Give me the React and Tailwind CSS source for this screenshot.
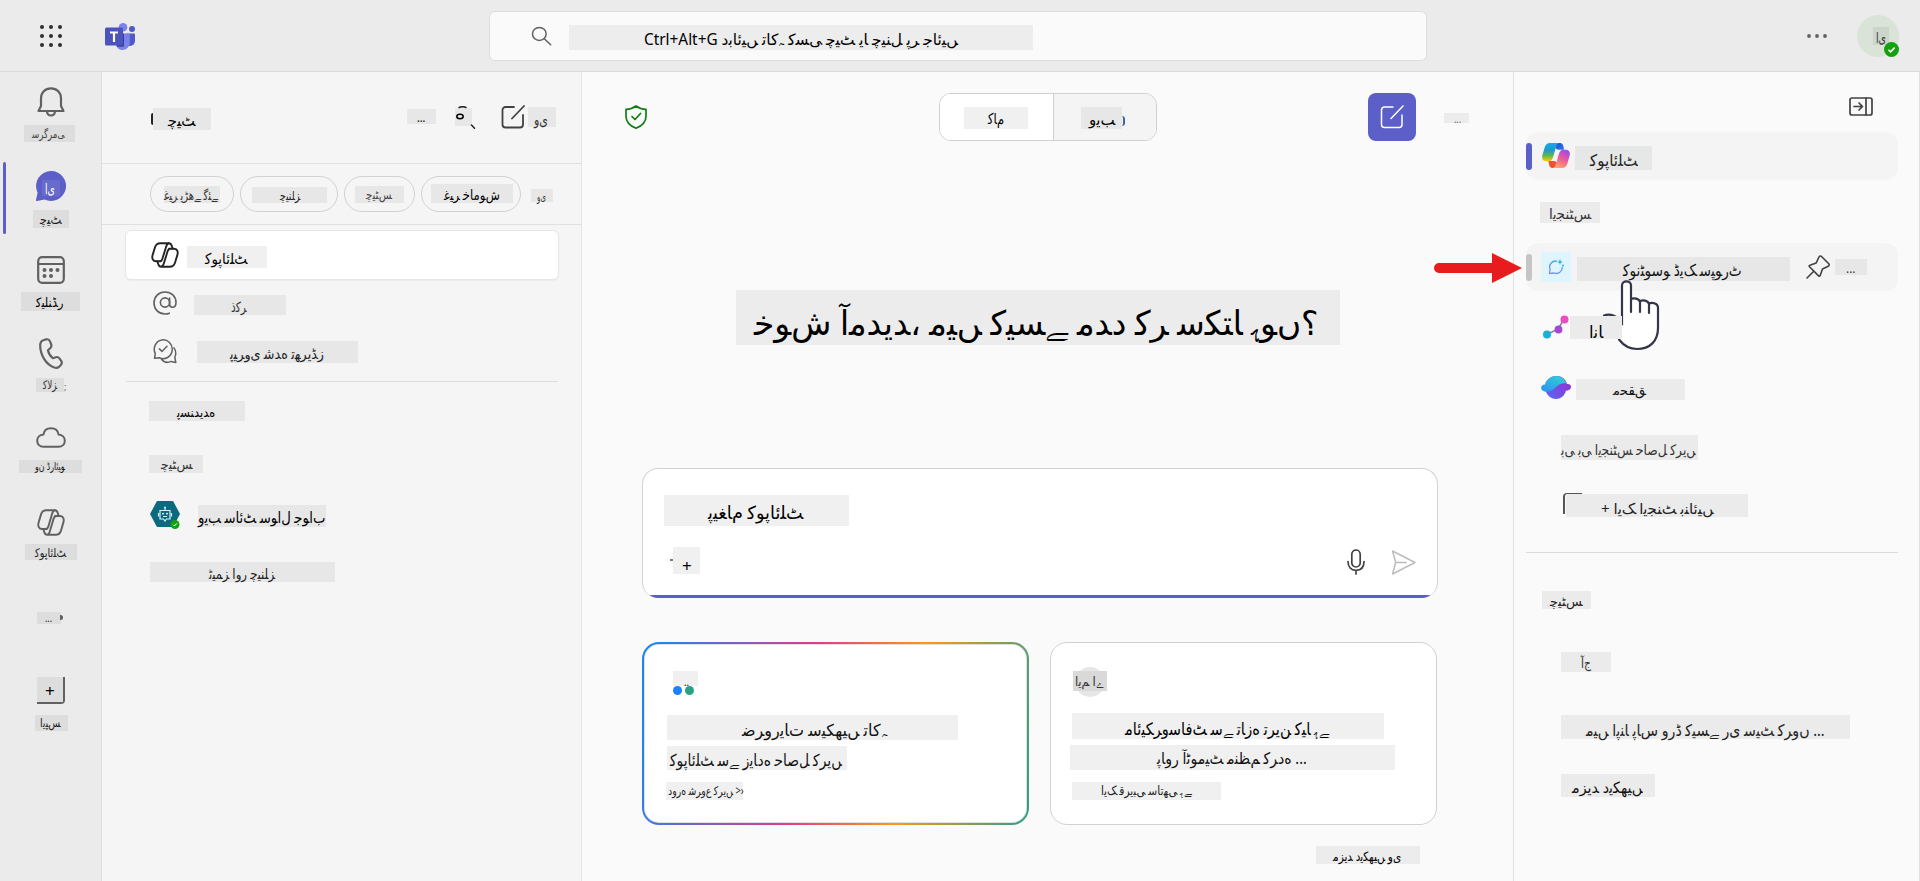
import React, { useLayoutEffect, useRef, useState } from "react";

/* ---------- Urdu shaping ---------- */

// letter -> first code point of its presentation forms, and whether it joins onwards
const FORMS = {
  "آ": [0xfe81, 0], "ئ": [0xfe89, 1], "ا": [0xfe8d, 0], "ب": [0xfe8f, 1], "ت": [0xfe95, 1],
  "ج": [0xfe9d, 1], "ح": [0xfea1, 1], "خ": [0xfea5, 1], "د": [0xfea9, 0], "ذ": [0xfeab, 0],
  "ر": [0xfead, 0], "ز": [0xfeaf, 0], "س": [0xfeb1, 1], "ش": [0xfeb5, 1], "ص": [0xfeb9, 1],
  "ض": [0xfebd, 1], "ظ": [0xfec5, 1], "ع": [0xfec9, 1], "غ": [0xfecd, 1], "ف": [0xfed1, 1],
  "ق": [0xfed5, 1], "ل": [0xfedd, 1], "م": [0xfee1, 1], "ن": [0xfee5, 1], "و": [0xfeed, 0],
  "پ": [0xfb56, 1], "ٹ": [0xfb66, 1], "چ": [0xfb7a, 1], "ڈ": [0xfb88, 0], "ڑ": [0xfb8c, 0],
  "ک": [0xfb8e, 1], "گ": [0xfb92, 1], "ں": [0xfb9e, 0], "ہ": [0xfba6, 1], "ھ": [0xfbaa, 1],
  "ے": [0xfbae, 0], "ی": [0xfbfc, 1],
};

function shape(text) {
  const chars = [...text];
  return chars
    .map((c, i) => {
      const form = FORMS[c];
      if (!form) return c;
      const before = FORMS[chars[i - 1]];
      const joinsBefore = Boolean(before && before[1]);
      const joinsAfter = Boolean(form[1] && FORMS[chars[i + 1]]);
      const offset = joinsBefore ? (joinsAfter ? 3 : 1) : joinsAfter ? 2 : 0;
      // the free-standing heh uses the rounder Arabic glyph
      if (c === "ہ" && offset === 0) return "\ufee9";
      return String.fromCharCode(form[0] + offset);
    })
    .join("");
}

// Text squeezed or stretched to a given width
function Fit({ children, width, className = "" }) {
  const ref = useRef(null);
  const [scale, setScale] = useState(1);
  useLayoutEffect(() => {
    if (width && ref.current) setScale(width / ref.current.offsetWidth);
  }, [width]);
  return (
    <span
      ref={ref}
      className={`mt-px block w-max shrink-0 origin-left whitespace-pre leading-none [direction:ltr] [unicode-bidi:bidi-override] ${className}`}
      style={{ transform: `scaleX(${scale})` }}
    >
      {shape(children)}
    </span>
  );
}

function Chip({ children, width, className, bg = "bg-[#e7e7e7]", text = "" }) {
  return (
    <div className={`flex shrink-0 items-start ${bg} ${className}`}>
      <Fit width={width} className={text}>{children}</Fit>
    </div>
  );
}

/* ---------- Icons ---------- */

function Svg({ children, className, box = "0 0 24 24", sw = 1.5 }) {
  return (
    <svg viewBox={box} preserveAspectRatio="none" className={`block shrink-0 ${className}`} fill="none" stroke="currentColor" strokeWidth={sw} strokeLinecap="round" strokeLinejoin="round">
      {children}
    </svg>
  );
}

const Compose = ({ className, sw = 1.7 }) => (
  <Svg className={className} sw={sw}>
    <path d="M13 2H4.500A3 3 0 0 0 1.500 5v14.500a3 3 0 0 0 3 3h14.500a3 3 0 0 0 3-3V10M11 13.500 23 1" />
  </Svg>
);

const HALF = "M10 19.300H5.200c-3.200 0-4.600-2.600-3.600-6.200L4 5.200C4.900 2.400 6.400 1.200 9.200 1.200h8.600c1.700 0 2.400.9 2.900 2.500l1 3M18 1.200c-1.700.2-2.300 1.500-2.800 3.200l-3.800 12.300c-.6 1.800-1.300 2.600-3 2.600";

const CopilotLine = ({ className, sw = 1.9 }) => (
  <Svg className={className} box="0 0 28 26" sw={sw}>
    <path d={HALF} />
    <path d={HALF} transform="rotate(180 14 13)" />
  </Svg>
);

const Teams = () => (
  <svg viewBox="0 0 30 27" className="block h-[27px] w-[30px] shrink-0">
    <circle cx="27" cy="6" r="3" fill="#5059c9" />
    <circle cx="18" cy="4.300" r="4.300" fill="#7b83eb" />
    <path d="M21 10.500h8c.6 0 1 .4 1 1V18a5 5 0 0 1-5 5h-4z" fill="#5059c9" />
    <path d="M11 10.500h13c.5 0 .8.4.8.9V19c0 4.500-3.300 8-7.400 8-3.600 0-6.400-2.600-6.400-7z" fill="#7b83eb" />
    <path d="M11 10.500h8v12c0 .8-.6 1.300-1.300 1.300h-5.500A8 8 0 0 1 11 20z" fill="#3b4192" />
    <rect y="4.500" width="18" height="18" rx="1.500" fill="#4b53bc" />
    <path d="M5 9.500h8M9 9.500V19" stroke="#fff" strokeWidth="2.200" fill="none" />
  </svg>
);

const Check = ({ className }) => (
  <svg viewBox="0 0 12 12" className={`absolute block ${className}`}>
    <circle cx="6" cy="6" r="6" fill="#13a10e" />
    <path d="M3.600 6.200 5.300 7.900 8.500 4.500" fill="none" stroke="#fff" strokeWidth="1.300" />
  </svg>
);

const CopilotColor = () => (
  <svg viewBox="0 0 28 25" className="ml-[9px] mt-[11px] block h-[25px] w-[28px] shrink-0">
    <defs>
      <linearGradient id="ca" x1="0" y1="0" x2="0" y2="1">
        <stop offset="0" stopColor="#18a8ee" /><stop offset=".4" stopColor="#2298c8" /><stop offset=".7" stopColor="#62b84c" /><stop offset="1" stopColor="#fcd000" />
      </linearGradient>
      <linearGradient id="cb" x1=".8" y1="0" x2=".3" y2="1">
        <stop offset="0" stopColor="#9a48ee" /><stop offset=".5" stopColor="#ee5a9a" /><stop offset="1" stopColor="#ffa765" />
      </linearGradient>
      <linearGradient id="cc" x1="0" y1="0" x2="1" y2="1">
        <stop offset="0" stopColor="#1b4ad6" /><stop offset="1" stopColor="#2a7ce8" />
      </linearGradient>
    </defs>
    <path d="M12 0h6c2 0 3 1.500 3.400 3.500l.8 3.300h-5.500c-2 0-3.200-1.500-3.600-3z" fill="url(#cc)" />
    <path d="M16 25h-5.500c-2 0-3-1.500-3.400-3.500l-.8-3.500h5.500c2 0 3.200 1.500 3.600 3z" fill="#ee5132" />
    <path d="M8 0h9.500c-2 .3-2.800 2-3.400 4l-3 10c-.7 2.500-2 4.300-4.500 4.300H4.500C1 18.300-.5 16 .3 12.500L2.500 5C3.500 1.800 5 0 8 0z" fill="url(#ca)" />
    <path d="M20 25h-9.500c2-.3 2.800-2 3.400-4l3-10c.7-2.500 2-4.300 4.500-4.300h2.100c3.500 0 5 2.300 4.200 5.800L25.500 20c-1 3.200-2.500 5-5.500 5z" fill="url(#cb)" />
  </svg>
);

/* ---------- Top bar ---------- */

function TopBar() {
  return (
    <header className="flex h-[72px] shrink-0 border-b border-[#dadada] bg-[#ebebeb]">
      <svg viewBox="0 0 23 23" className="ml-[40px] mt-[25px] block h-[23px] w-[23px] shrink-0" fill="#2f2f2f">
        {[2, 11, 20].map((y) => [2, 11, 20].map((x) => <circle key={`${x}-${y}`} cx={x} cy={y} r="2" />))}
      </svg>
      <div className="ml-[42px] mt-[23px]"><Teams /></div>
      <div className="ml-[354px] mt-[11px] flex h-[50px] w-[938px] shrink-0 rounded-[6px] border border-[#dedede] bg-[#fafafa]">
        <Svg className="ml-[41px] mt-[14px] h-[20px] w-[21px] text-[#616161]" sw={1.7}>
          <circle cx="9.500" cy="9.500" r="7.800" /><path d="m15.500 15.500 7 7" />
        </Svg>
        <Chip width={314} bg="bg-[#ededed]" className="ml-[17px] mt-[13px] h-[25px] w-[464px] pl-[75px] pt-[6px]" text="text-[15.500px]">
          Ctrl+Alt+G دبائیں تاکہ کسی چیٹ یا چینل پر جائیں
        </Chip>
      </div>
      <svg viewBox="0 0 20 4" className="ml-[380px] mt-[34px] block h-[4px] w-[20px] shrink-0" fill="#616161">
        <circle cx="2" cy="2" r="1.900" /><circle cx="10" cy="2" r="1.900" /><circle cx="18" cy="2" r="1.900" />
      </svg>
      <div className="relative ml-[30px] mt-[15px] h-[42px] w-[42px] shrink-0 rounded-full bg-[#dae3d7]">
        <Chip width={10} bg="bg-[#ccd5c9]" className="ml-[16px] mt-[12px] h-[18px] w-[16px] pl-[3px] pt-[3px]" text="text-[14px] text-[#333]">ای</Chip>
        <Check className="right-0 bottom-0 h-[15px] w-[15px]" />
      </div>
    </header>
  );
}

/* ---------- App rail ---------- */

const railChip = "bg-[#dddddd]";

function Rail() {
  return (
    <nav className="flex w-[102px] shrink-0 flex-col border-r border-[#dedede] bg-[#ebebeb] text-[#616161]">
      <Svg className="ml-[37px] mt-[15px] h-[30px] w-[28px]" box="0 0 28 30" sw={2.200}>
        <path d="M14 1.300c6 0 10 4.300 10 10V19l2.500 5H1.500L4 19v-7.700c0-5.700 4-10 10-10zM10 24.500c.3 2.800 1.800 4 4 4s3.700-1.200 4-4" />
      </Svg>
      <Chip width={33} bg={railChip} className="ml-[24px] mt-[8px] h-[17px] w-[51px] pl-[8px] pt-[2px]" text="text-[11.500px] text-[#444]">سرگرمی</Chip>

      <div className="mt-[20px] flex h-[72px] shrink-0">
        <div className="ml-[3px] h-[72px] w-[3px] rounded-full bg-[#5b5fc7]" />
        <div className="ml-[27px] pt-[9px]">
          <div className="relative ml-[3px] h-[30px] w-[30px]">
            <svg viewBox="0 0 30 30" className="absolute inset-0 block h-[30px] w-[30px]" fill="#5b5fc7">
              <path d="M15 0a15 15 0 1 1-6.500 28.500L1 30c-.7.100-1.200-.4-1-1l1.600-7.300A15 15 0 0 1 15 0z" />
            </svg>
            <div className="relative flex pl-[6px] pt-[9px]">
              <Chip width={10} bg="bg-[#676bcb]" className="h-[16px] w-[18px] pl-[3px] pt-px" text="text-[14px] text-white">ای</Chip>
            </div>
          </div>
          <Chip width={22} bg={railChip} className="mt-[9px] h-[18px] w-[36px] pl-[7px] pt-[2px]" text="text-[13px] text-[#222]">چیٹ</Chip>
        </div>
      </div>

      <Svg className="ml-[37px] mt-[22px] h-[28px] w-[28px]" box="0 0 28 28" sw={2.200}>
        <rect x="1.200" y="1.200" width="25.600" height="25.600" rx="4" /><path d="M1.500 8h25" />
        <g fill="currentColor" stroke="none"><circle cx="7.500" cy="14" r="2" /><circle cx="14" cy="14" r="2" /><circle cx="20.500" cy="14" r="2" /><circle cx="7.500" cy="20" r="2" /><circle cx="14" cy="20" r="2" /></g>
      </Svg>
      <Chip width={27} bg={railChip} className="ml-[21px] mt-[8px] h-[19px] w-[59px] pl-[15px] pt-[3px]" text="text-[13px] text-black">کیلنڈر</Chip>

      <Svg className="ml-[39px] mt-[27px] h-[31px] w-[24px]" box="0 0 24 31" sw={2.200}>
        <path d="m5 2 2-.6c2-.5 3.300.3 4 2l1.200 3c.5 1.500.2 2.700-1 3.800L9 12.200c.5 3 2.500 6 4.800 8l3-1c1.500-.5 2.700 0 3.600 1.200l1.800 2.500c1 1.500.8 3-.5 4.300L20 28.800c-1.200 1-3 1.200-4.700.7C7 26.500 1 17 1.200 6.800 1.300 4.300 2.600 2.600 5 2z" />
      </Svg>
      <div className="ml-[36px] mt-[9px] flex">
        <Chip width={14} bg={railChip} className="h-[14px] w-[28px] pl-[7px] pt-0" text="text-[12px] text-[#333]">کالز</Chip>
        <span className="text-[9px] leading-[18px]">;</span>
      </div>

      <Svg className="ml-[36px] mt-[31px] h-[21px] w-[30px]" box="0 0 30 21" sw={2}>
        <path d="M7.500 7.500C8 3.500 11 1.200 15 1.200s7 2.300 7.500 6.300c3.800.2 6.300 2.800 6.300 6.300s-2.600 6-6.300 6h-15c-3.800 0-6.300-2.500-6.300-6s2.500-6.100 6.300-6.300z" />
      </Svg>
      <Chip width={30} bg={railChip} className="ml-[19px] mt-[12px] h-[13px] w-[63px] pl-[16px] pt-0" text="text-[10.500px] text-[#111]">ون ڈرائیو</Chip>

      <CopilotLine className="ml-[37px] mt-[36px] h-[27px] w-[28px]" />
      <Chip width={31} bg={railChip} className="ml-[25px] mt-[8px] h-[16px] w-[52px] pl-[10px] pt-[2px]" text="text-[12px] text-[#222]">کوپائلٹ</Chip>

      <div className="ml-[37px] mt-[52px] flex">
        <Chip width={7} bg={railChip} className="h-[12px] w-[24px] pl-[8px]" text="text-[10px] text-[#111]">...</Chip>
        <div className="-ml-px mt-[3px] h-[5px] w-[3px] rounded-r-full bg-[#616161]" />
      </div>

      <div className="ml-[37px] mt-[53px] h-[27px] w-[28px] rounded-br-[4px] border-b-2 border-r-2 border-[#616161]">
        <Chip width={10} bg={railChip} className="h-[25px] w-[26px] pl-[8px] pt-[4px]" text="text-[17px] text-black">+</Chip>
      </div>
      <Chip width={21} bg={railChip} className="ml-[35px] mt-[11px] h-[16px] w-[33px] pl-[5px] pt-px" text="text-[12px] text-[#222]">ایپس</Chip>
    </nav>
  );
}

/* ---------- Chat list ---------- */

function ChatList() {
  const pill = "flex h-[36px] shrink-0 rounded-full border border-[#d1d1d1]";
  return (
    <aside className="flex w-[480px] shrink-0 flex-col border-r border-[#e4e4e4] bg-[#f5f5f5]">
      <div className="flex h-[92px] shrink-0 border-b border-[#e0e0e0]">
        <div className="ml-[49px] mt-[41px] h-[12px] w-[2px] rounded-l-full bg-[#242424]" />
        <Chip width={28} className="mt-[36px] h-[22px] w-[58px] pl-[15px] pt-[4px]" text="text-[14.500px]">چیٹ</Chip>
        <Chip width={8} className="ml-[196px] mt-[37px] h-[15px] w-[29px] pl-[10px] pt-px" text="text-[13px]">...</Chip>
        <div className="relative ml-[19px] mt-[36px] h-[18px] w-[17px] bg-[#e7e7e7]">
          <Svg className="absolute -left-px -top-[2px] h-[23px] w-[22px] text-[#222]" box="0 0 22 23" sw={1.500}>
            <path d="M5 1.500c2.500-1 5-1 7 0M17.500 19l3 3.200" /><ellipse cx="6" cy="10.500" rx="3.200" ry="2.200" stroke="#000" />
          </Svg>
        </div>
        <Compose className="ml-[29px] mt-[33px] h-[24px] w-[24px] text-[#424242]" sw={1.800} />
        <Chip width={14} className="ml-[3px] mt-[35px] h-[20px] w-[28px] pl-[6px] pt-[4px]" text="text-[15px] text-[#333]">وی</Chip>
      </div>
      <div className="flex h-[61px] shrink-0 gap-[6px] border-b border-[#e0e0e0] pl-[48px] pt-[12px]">
        <div className={`${pill} w-[84px]`}><Chip width={54} className="ml-[13px] mt-[9px] h-[17px] w-[56px] pt-[2px]" text="text-[13px] text-[#333]">غیر پڑھے گئے</Chip></div>
        <div className={`${pill} w-[98px]`}><Chip width={20} className="ml-[11px] mt-[10px] h-[16px] w-[75px] pl-[28px] pt-[2px]" text="text-[12px] text-[#222]">چینلز</Chip></div>
        <div className={`${pill} w-[71px]`}><Chip width={26} className="ml-[10px] mt-[9px] h-[17px] w-[49px] pl-[11px] pt-[2px]" text="text-[12px] text-[#444]">چیٹس</Chip></div>
        <div className={`${pill} w-[100px]`}><Chip width={56} className="ml-[9px] mt-[7px] h-[19px] w-[82px] pl-[13px] pt-[3px]" text="text-[14px]">غیر خاموش</Chip></div>
        <Chip width={9} className="ml-[4px] mt-[13px] h-[13px] w-[22px] pl-[6px] pt-px" text="text-[11px] text-[#333]">وی</Chip>
      </div>

      <div className="ml-[23px] mt-[5px] flex h-[50px] w-[434px] shrink-0 rounded-[6px] border border-[#e6e6e6] bg-white shadow-[0_1px_1px_rgba(0,0,0,0.04)]">
        <CopilotLine className="ml-[25px] mt-[11px] h-[26px] w-[28px] text-[#242424]" />
        <Chip width={43} bg="bg-[#f0f0f0]" className="ml-[8px] mt-[15px] h-[22px] w-[80px] pl-[18px] pt-[4px]" text="text-[15px]">کوپائلٹ</Chip>
      </div>
      <div className="mt-[11px] flex h-[24px] shrink-0 text-[#616161]">
        <Svg className="ml-[51px] h-[24px] w-[24px]" sw={1.600}>
          <circle cx="12" cy="11.500" r="4.600" /><path d="M16.600 7v6c0 2 1 3.200 2.800 3.200 2 0 3.600-1.700 3.600-4.700C23 5.300 18.300 1 12 1S1 5.500 1 12s4.700 11 11 11c1.700 0 3-.2 4.300-.8" />
        </Svg>
        <Chip width={16} className="ml-[17px] mt-[4px] h-[20px] w-[92px] pl-[37px] pt-[4px]" text="text-[14px] text-[#333]">ذکر</Chip>
      </div>
      <div className="mt-[23px] flex h-[25px] shrink-0 text-[#616161]">
        <Svg className="ml-[51px] mt-px h-[25px] w-[24px]" sw={1.500}>
          <path d="M1.500 18.500 2.300 14A9 9 0 1 1 6.500 18zM6.500 9.500 9 12l5-5M21 8.500c2 2.800 2.200 6.200.8 9l1 5-4.800-1c-3.500 1.600-7.200.8-9.500-2" />
        </Svg>
        <Chip width={94} className="ml-[20px] mt-[3px] h-[22px] w-[161px] pl-[33px] pt-[4px]" text="text-[14.500px] text-[#222]">پیروی شدہ تھریڈز</Chip>
      </div>
      <div className="ml-[24px] mt-[18px] h-px w-[432px] shrink-0 bg-[#dcdcdc]" />
      <Chip width={38} className="ml-[47px] mt-[19px] h-[20px] w-[96px] pl-[28px] pt-[4px]" text="text-[13px]">پسندیدہ</Chip>
      <Chip width={31} className="ml-[47px] mt-[34px] h-[18px] w-[54px] pl-[12px] pt-[2px]" text="text-[13px] text-[#333]">چیٹس</Chip>
      <div className="mt-[28px] flex h-[28px] shrink-0">
        <div className="relative ml-[48px] h-[28px] w-[30px]">
          <svg viewBox="0 0 30 28" className="block h-[28px] w-[30px]">
            <path d="M8 0h14c.8 0 1.200.3 1.600 1L30 13l-6.400 12c-.4.700-.8 1-1.600 1H8c-.8 0-1.200-.3-1.600-1L0 13 6.400 1C6.800.3 7.200 0 8 0z" fill="#0b6a7f" />
            <path d="M10 9.500h10v8.500h-3.500L15 20l-1.500-2H10zM15 9V6.500M8.500 12v3.500M21.500 12v3.500M13 15.500h4" fill="none" stroke="#d5f4f5" strokeWidth="1.200" />
            <circle cx="13" cy="12.700" r=".9" fill="#fff" /><circle cx="17" cy="12.700" r=".9" fill="#fff" /><circle cx="15" cy="6.500" r="1" fill="#d5f4f5" />
          </svg>
          <Check className="bottom-0 right-0 h-[9px] w-[10px]" />
        </div>
        <Chip width={127} className="ml-[18px] mt-[4px] h-[22px] w-[128px] pt-[4px]" text="text-[15.500px]">ویب سائٹ سوال جواب</Chip>
      </div>
      <Chip width={66} className="ml-[48px] mt-[33px] h-[20px] w-[185px] pl-[59px] pt-[4px]" text="text-[14px] text-[#222]">ٹیمز اور چینلز</Chip>
    </aside>
  );
}

/* ---------- Main ---------- */

const cardChip = "bg-[#f0f0f0]";

function Main() {
  return (
    <main className="flex w-[931px] shrink-0 flex-col bg-[#fafafa]">
      <div className="flex h-[69px] shrink-0 items-start">
        <Svg className="ml-[43px] mt-[33px] h-[24px] w-[22px] text-[#107c10]" box="0 0 22 24" sw={1.700}>
          <path d="M11 1c3 2.300 6 3.300 10 3.400V11c0 6-3.600 9.800-10 12.200C4.600 20.800 1 17 1 11V4.400C5 4.300 8 3.300 11 1zM7 11.500l3 3 5.500-6" />
        </Svg>
        <div className="ml-[292px] mt-[21px] flex h-[48px] w-[218px] shrink-0 overflow-hidden rounded-[12px] border border-[#cfcfcf]">
          <div className="w-[114px] border-r border-[#cfcfcf] bg-white">
            <Chip width={16} bg={cardChip} className="ml-[24px] mt-[13px] h-[22px] w-[64px] pl-[24px] pt-[3px]" text="text-[15px]">کام</Chip>
          </div>
          <div className="flex grow bg-[#f4f4f4]">
            <Chip width={26} className="ml-[27px] mt-[13px] h-[22px] w-[41px] pl-[8px] pt-[4px]" text="text-[15px]">ویب</Chip>
            <div className="mt-[22px] h-[10px] w-[3px] rounded-r-full border-r-2 border-[#3a66a8]" />
          </div>
        </div>
        <div className="ml-[211px] mt-[21px] flex h-[48px] w-[48px] shrink-0 items-center justify-center rounded-[8px] bg-[#5b5fc7] text-white">
          <Compose className="h-[24px] w-[24px]" sw={1.500} />
        </div>
        <Chip width={7} bg="bg-[#ececec]" className="ml-[28px] mt-[41px] h-[10px] w-[25px] pl-[10px]" text="text-[10px] text-[#555]">...</Chip>
      </div>

      <Chip width={565} bg="bg-[#ececec]" className="ml-[154px] mt-[149px] h-[55px] w-[604px] pl-[18px] pt-[14px]" text="text-[34px]">
        خوش آمدید، میں کیسے مدد کر سکتا ہوں؟
      </Chip>

      <div className="relative ml-[60px] mt-[123px] flex h-[130px] w-[796px] shrink-0 overflow-hidden rounded-[16px] border border-b-0 border-[#d1d1d1] bg-white">
        <div className="w-[210px]">
          <Chip width={95} bg={cardChip} className="ml-[21px] mt-[26px] h-[31px] w-[185px] pl-[44px] pt-[7px]" text="text-[18px]">پیغام کوپائلٹ</Chip>
          <div className="ml-[27px] mt-[21px] flex">
            <div className="mt-[12px] h-[2px] w-[3px] bg-[#777]" />
            <Chip width={10} bg={cardChip} className="h-[27px] w-[27px] pl-[9px] pt-[9px]" text="text-[17px]">+</Chip>
          </div>
        </div>
        <Svg className="ml-[494px] mt-[80px] h-[26px] w-[18px] text-[#424242]" box="0 0 18 26" sw={1.700}>
          <rect x="4.800" y="1" width="8.400" height="17" rx="4.200" /><path d="M1 12.500c0 5.500 3 8.800 8 8.800s8-3.300 8-8.800M9 21.500V25" />
        </Svg>
        <Svg className="ml-[26px] mt-[81px] h-[25px] w-[25px] text-[#bdbdbd]" sw={1.500}>
          <path d="M1.500 1 23 12 1.500 23 4.500 12zM4.500 12h10" />
        </Svg>
        <div className="absolute bottom-0 left-0 h-[3px] w-full bg-[#5b5fc7]" />
      </div>

      <div className="ml-[60px] mt-[44px] flex shrink-0 gap-[21px]">
        <div className="h-[183px] w-[387px] rounded-[17px] bg-[linear-gradient(100deg,#1c86f0_0%,#1c86f0_3%,#e03c8a_42%,#fa9a14_68%,#2aa08a_100%)] p-[2px]">
          <div className="flex h-[179px] w-[383px] flex-col rounded-[15px] bg-white shadow-[inset_0_0_0_1px_rgba(0,0,0,0.12)]">
            <Chip width={5} bg={cardChip} className="ml-[29px] mt-[27px] h-[15px] w-[25px] pl-[11px] pt-[4px]" text="text-[11px]">..</Chip>
            <div className="ml-[29px] flex h-[9px] gap-[3px]">
              <div className="h-[9px] w-[9px] rounded-full bg-[#1c80f8]" />
              <div className="h-[9px] w-[9px] rounded-full bg-[#2ba085]" />
            </div>
            <Chip width={144} bg={cardChip} className="ml-[23px] mt-[20px] h-[25px] w-[291px] pl-[75px] pt-[6px]" text="text-[16.500px] text-[#111]">ضروریات سیکھیں تاکہ</Chip>
            <Chip width={172} bg={cardChip} className="ml-[23px] mt-[6px] h-[24px] w-[180px] pl-[3px] pt-[5px]" text="text-[16.500px] text-[#111]">کوپائلٹ سے زیادہ حاصل کریں</Chip>
            <Chip width={76} bg={cardChip} className="ml-[22px] mt-[12px] h-[18px] w-[77px] pl-[2px] pt-[2px]" text="text-[12px] text-[#222]">{"دورہ شروع کریں >›"}</Chip>
          </div>
        </div>
        <div className="flex h-[183px] w-[387px] flex-col rounded-[17px] border border-[#d1d1d1] bg-white">
          <div className="ml-[24px] mt-[24px] flex h-[30px] w-[30px] items-center justify-center rounded-full bg-[#e6e6e6]">
            <Chip width={29} bg="bg-[#d9d9d9]" className="-mt-[2px] h-[20px] w-[34px] pl-[2px] pt-[3px]" text="text-[13px] text-[#333]">ایم اے</Chip>
          </div>
          <Chip width={204} bg={cardChip} className="ml-[21px] mt-[16px] h-[26px] w-[312px] pl-[53px] pt-[6px]" text="text-[17px]">مائیکروسافٹ سے تازہ ترین کیا ہے</Chip>
          <Chip width={150} bg={cardChip} className="ml-[19px] mt-[6px] h-[25px] w-[325px] pl-[87px] pt-[4px]" text="text-[16px] text-[#111]">پاور آٹومیٹ منظم کردہ ...</Chip>
          <Chip width={90} bg={cardChip} className="ml-[21px] mt-[12px] h-[18px] w-[149px] pl-[29px] pt-[2px]" text="text-[12.500px] text-[#222]">ایک قریبی ساتھی ہے</Chip>
        </div>
      </div>
      <Chip width={68} bg="bg-[#ececec]" className="ml-[734px] mt-[21px] h-[18px] w-[104px] pl-[17px] pt-[3px]" text="text-[13px]">مزید دیکھیں وی</Chip>
    </main>
  );
}

/* ---------- Agents panel ---------- */

const sideChip = "bg-[#ebebeb]";

function Hand() {
  return (
    <svg viewBox="0 0 62 72" className="absolute left-[88px] top-[208px] block h-[72px] w-[62px]" fill="none">
      <path d="M3 35c5-3 12-1.500 17 5v8L12 56c6 8 11 14 23 14 14 0 22-9 22-22V24.500c0-5-8.500-5-9.500-1-1-6-8.500-6-9.500-1.500-1.500-5-8.500-4.500-9 0V5.500C29 0 20 0 20 5.500V56l-6-2z" fill="#fff" />
      <path d="M2 35.500c6-2.500 13 0 18 7V5.500C20 0 29 0 29 5.500V32M29 19c3-1.500 8-.5 9 3v10M38 21c3-1.500 8-.5 9 3v9M47 23.500c4-1.500 9 0 9 4V48c0 13-8 21-21 21-8 0-13-3-18-9.500" stroke="#33354a" strokeWidth="2.200" strokeLinecap="round" />
    </svg>
  );
}

function Agents() {
  return (
    <aside className="relative flex w-[407px] shrink-0 flex-col border-l border-r border-[#e0e0e0] bg-[#fafafa]">
      <Svg className="ml-[335px] mt-[25px] h-[19px] w-[24px] text-[#424242]" box="0 0 24 19" sw={1.700}>
        <rect x="1" y="1" width="22" height="17" rx="2" /><path d="M17 1v17M5 9.500h8M10 6l3.500 3.500L10 13" />
      </Svg>

      <div className="ml-[12px] mt-[16px] flex h-[48px] w-[372px] shrink-0 rounded-[12px] bg-[#f4f4f4]">
        <div className="mr-px mt-[11px] h-[27px] w-[6px] rounded-full bg-[#5b5fc7]" />
        <CopilotColor />
        <Chip width={48} bg="bg-[#e6e8e7]" className="ml-[5px] mt-[14px] h-[24px] w-[77px] pl-[15px] pt-[5px]" text="text-[16px] text-[#222]">کوپائلٹ</Chip>
      </div>
      <Chip width={42} bg={sideChip} className="ml-[26px] mt-[22px] h-[21px] w-[60px] pl-[9px] pt-[4px]" text="text-[14px] text-[#333]">ایجنٹس</Chip>
      <div className="ml-[12px] mt-[20px] flex h-[48px] w-[372px] shrink-0 rounded-[12px] bg-[#f4f4f4]">
        <div className="mt-[11px] h-[27px] w-[6px] rounded-full bg-[#c5c5c5]" />
        <div className="ml-[9px] mt-[9px] flex h-[30px] w-[30px] items-center justify-center bg-[#dff5fe]">
          <svg viewBox="0 0 16 16" className="block h-[16px] w-[16px]" fill="none">
            <defs><linearGradient id="ch" x1="1" y1="0" x2="0" y2="1"><stop offset="0" stopColor="#28b4dc" /><stop offset="1" stopColor="#8d86f0" /></linearGradient></defs>
            <path d="M9 2.200A6 6 0 0 0 2 10l-.5 4.500L6 14a6 6 0 0 0 8.300-6" stroke="url(#ch)" strokeWidth="1.300" />
            <path d="m12 0 .8 2.200L15 3l-2.200.8L12 6l-.8-2.200L9 3l2.200-.8z" fill="#2ab0dd" /><circle cx="15" cy="6.500" r="1" fill="#2ab0dd" />
          </svg>
        </div>
        <Chip width={119} className="ml-[6px] mt-[14px] h-[24px] w-[213px] pl-[46px] pt-[4px]" text="text-[16px] text-[#111]">کونٹوسو ڈیک سپورٹ</Chip>
        <Svg className="ml-[16px] mt-[12px] h-[24px] w-[24px] text-[#424242]" sw={1.600}>
          <path d="m15.500 1.500 7.300 7.300c.7.800.4 2-.6 2.500l-5.700 2.600-2.300 6.600c-.3.900-1 1-1.600.4L3.500 11.800c-.6-.6-.5-1.300.4-1.600l6.300-2.300L13 2c.5-1 1.700-1.300 2.500-.5zM7.500 16.500 1 23" />
        </Svg>
        <Chip width={9} className="ml-[5px] mt-[16px] h-[16px] w-[32px] pl-[11px] pt-[2px]" text="text-[13px] text-[#333]">...</Chip>
      </div>
      <div className="mt-[24px] flex h-[24px] shrink-0">
        <svg viewBox="0 0 27 24" className="ml-[28px] block h-[24px] w-[27px] shrink-0">
          <path d="m5 19.500 11-5.500 6-9.500" stroke="#8a7f96" strokeWidth="1.500" fill="none" />
          <circle cx="5" cy="19.500" r="4" fill="#1cb0d8" /><circle cx="16.500" cy="14.500" r="3.900" fill="#a347d8" /><circle cx="22.500" cy="4.500" r="4" fill="#ea4fc2" />
        </svg>
        <Chip width={14} bg={sideChip} className="z-10 ml-[1px] mt-px h-[23px] w-[52px] pl-[19px] pt-[7px]" text="text-[16.500px]">انا</Chip>
      </div>
      <div className="mt-[37px] flex h-[23px] shrink-0">
        <svg viewBox="0 0 30 23" className="ml-[27px] block h-[23px] w-[30px] shrink-0">
          <defs>
            <linearGradient id="pa" x1="0" y1="1" x2="1" y2="0"><stop offset="0" stopColor="#2f8df0" /><stop offset="1" stopColor="#2fd8d2" /></linearGradient>
            <linearGradient id="pb" x1="0" y1=".8" x2="1" y2="0"><stop offset="0" stopColor="#5b66f0" /><stop offset="1" stopColor="#9a28cc" /></linearGradient>
          </defs>
          <path d="M4 12C4 5 9 0 15 0s10 3.500 11 8c3-.5 5 2 3.500 4.500-1 1.500-2 2-4.500 2.300C23.500 20 19.500 23 15 23S6.500 20 4.800 15.500z" fill="url(#pb)" />
          <path d="M4 8.500C5.500 3 10 0 15 0c5 0 9 3 10.500 7.500-6-1-9 2.500-12.500 5.300-3.500 2.800-8 4-11.500 1.700C-1 12.500 0 8.500 4 8.500z" fill="url(#pa)" />
        </svg>
        <Chip width={33} bg={sideChip} className="ml-[5px] mt-[3px] h-[21px] w-[109px] pl-[37px] pt-[4px]" text="text-[13.500px] text-[#111]">محقق</Chip>
      </div>
      <Chip width={135} bg={sideChip} className="ml-[47px] mt-[36px] h-[25px] w-[137px] pt-[6px]" text="text-[14.500px] text-[#333]">بی بی ایجنٹس حاصل کریں</Chip>
      <div className="ml-[49px] mt-[33px] flex h-[24px] shrink-0">
        <div className="h-[21px] w-[19px] rounded-tl-[4px] border-l-2 border-t border-[#555]" />
        <Chip width={113} bg={sideChip} className="-ml-[16px] mt-px h-[23px] w-[182px] pl-[35px] pt-[6px]" text="text-[15px] text-[#222]">+ ایک ایجنٹ بنائیں</Chip>
      </div>
      <div className="ml-[12px] mt-[35px] h-px w-[372px] shrink-0 bg-[#dcdcdc]" />
      <Chip width={32} bg={sideChip} className="ml-[28px] mt-[38px] h-[18px] w-[49px] pl-[8px] pt-[3px]" text="text-[13px] text-[#222]">چیٹس</Chip>
      <Chip width={10} bg={sideChip} className="ml-[47px] mt-[43px] h-[20px] w-[50px] pl-[20px] pt-[3px]" text="text-[14px] text-[#333]">آج</Chip>
      <Chip width={239} bg={sideChip} className="ml-[47px] mt-[43px] h-[24px] w-[289px] pl-[25px] pt-[6px]" text="text-[16px] text-[#222]">میں اپنا پاس ورڈ کیسے ری سیٹ کروں ...</Chip>
      <Chip width={71} bg={sideChip} className="ml-[47px] mt-[35px] h-[23px] w-[94px] pl-[11px] pt-[5px]" text="text-[15.500px] text-[#111]">مزید دیکھیں</Chip>

      <svg viewBox="0 0 88 30" className="absolute -left-[80px] top-[181px] block h-[30px] w-[88px]" fill="#e81c1c">
        <path d="M5 10h53V0l30 15-30 15V20H5a5 5 0 0 1 0-10z" />
      </svg>
      <Hand />
    </aside>
  );
}

export default function App() {
  return (
    <div className="flex h-[881px] w-[1920px] flex-col overflow-hidden bg-[#fafafa] font-['Noto_Sans','DejaVu_Sans',sans-serif] text-black">
      <TopBar />
      <div className="flex min-h-0 grow">
        <Rail />
        <ChatList />
        <Main />
        <Agents />
      </div>
    </div>
  );
}
